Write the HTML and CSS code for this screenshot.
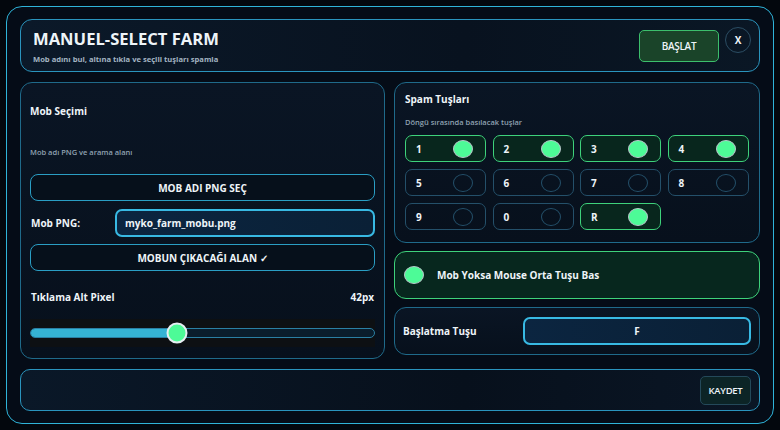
FILE: index.html
```html
<!DOCTYPE html>
<html lang="tr">
<head>
    <meta charset="UTF-8">
    <title>Manuel-Select Farm</title>
    <link rel="stylesheet" href="styles.css">
</head>
<body>
    <div class="frame">
        <header class="header">
            <div class="title-block">
                <h1 class="title">MANUEL-SELECT FARM</h1>
                <p class="subtitle">Mob adını bul, altına tıkla ve seçili tuşları spamla</p>
            </div>
            <button class="start-btn">BAŞLAT</button>
            <button class="close-btn">X</button>
        </header>

        <main class="main">
            <section class="card mob-card">
                <h2 class="card-title mob-title">Mob Seçimi</h2>
                <p class="card-desc mob-desc">Mob adı PNG ve arama alanı</p>
                <button class="wide-btn">MOB ADI PNG SEÇ</button>
                <div class="png-row">
                    <span class="field-label">Mob PNG:</span>
                    <div class="input-box left">myko_farm_mobu.png</div>
                </div>
                <button class="wide-btn">MOBUN ÇIKACAĞI ALAN ✓</button>
                <div class="pixel-row">
                    <span class="field-label">Tıklama Alt Pixel</span>
                    <span class="field-label">42px</span>
                </div>
                <div class="slider-band">
                    <div class="slider-track">
                        <div class="slider-fill" style="width: 42.5%"></div>
                        <div class="slider-thumb" style="left: 42.5%"></div>
                    </div>
                </div>
            </section>

            <div class="right-col">
                <section class="card spam-card">
                    <h2 class="card-title">Spam Tuşları</h2>
                    <p class="card-desc spam-desc">Döngü sırasında basılacak tuşlar</p>
                    <div class="key-grid">
                        <div class="key on"><span>1</span><i class="dot"></i></div>
                        <div class="key on"><span>2</span><i class="dot"></i></div>
                        <div class="key on"><span>3</span><i class="dot"></i></div>
                        <div class="key on"><span>4</span><i class="dot"></i></div>
                        <div class="key"><span>5</span><i class="dot"></i></div>
                        <div class="key"><span>6</span><i class="dot"></i></div>
                        <div class="key"><span>7</span><i class="dot"></i></div>
                        <div class="key"><span>8</span><i class="dot"></i></div>
                        <div class="key"><span>9</span><i class="dot"></i></div>
                        <div class="key"><span>0</span><i class="dot"></i></div>
                        <div class="key on"><span>R</span><i class="dot"></i></div>
                    </div>
                </section>

                <section class="card mouse-card">
                    <i class="dot on-dot"></i>
                    <span class="field-label">Mob Yoksa Mouse Orta Tuşu Bas</span>
                </section>

                <section class="card hotkey-card">
                    <span class="field-label">Başlatma Tuşu</span>
                    <div class="input-box center">F</div>
                </section>
            </div>
        </main>

        <footer class="footer">
            <button class="save-btn">KAYDET</button>
        </footer>
    </div>
</body>
</html>
```

FILE: styles.css
```css
* {
    margin: 0;
    padding: 0;
    box-sizing: border-box;
}

html, body {
    width: 100%;
    height: 100%;
    background: #03070d;
    overflow: hidden;
    font-family: "Open Sans", "Noto Sans", sans-serif;
    color: #eef4f8;
}

button {
    font-family: inherit;
    color: inherit;
    cursor: pointer;
}

.frame {
    margin: 6px;
    width: 768px;
    height: 418px;
    border: 1px solid #2fb3d8;
    border-radius: 16px;
    background: #050c17;
    padding: 12px 13px;
    display: flex;
    flex-direction: column;
}

.header {
    height: 53px;
    border: 1px solid #2a94bd;
    border-radius: 12px;
    background: linear-gradient(90deg, #0b1929, #08121f 60%, #0a1725);
    display: flex;
    align-items: center;
    padding: 0 8px 0 12px;
}

.title-block {
    flex: 1;
    padding-top: 1px;
}

.title {
    font-size: 16.6px;
    font-weight: 700;
    line-height: 20px;
}

.subtitle {
    font-size: 7.6px;
    font-weight: 700;
    color: #a3b4c2;
    margin-top: 5px;
}

.start-btn {
    width: 80px;
    height: 32px;
    border: 1px solid #3cbf6c;
    border-radius: 5px;
    background: #1a4429;
    font-size: 10px;
    font-weight: 600;
    letter-spacing: -0.3px;
    margin-right: 6px;
}

.close-btn {
    width: 26px;
    height: 26px;
    border: 1px solid #2b4d63;
    border-radius: 50%;
    background: transparent;
    font-size: 10px;
    font-weight: 700;
    margin-top: -12px;
}

.main {
    display: grid;
    grid-template-columns: 365px 366px;
    gap: 9px;
    margin-top: 10px;
    height: 277px;
}

.card {
    border: 1px solid #1f6a8a;
    border-radius: 12px;
    background: linear-gradient(180deg, #0a1524, #07101c);
}

.card-title {
    font-size: 10px;
    font-weight: 700;
}

.card-desc {
    font-size: 7.5px;
    font-weight: 600;
    color: #8fa1b1;
}

.mob-card {
    padding: 14px 9px 10px;
    display: flex;
    flex-direction: column;
}

.mob-title {
    margin-top: 7px;
}

.mob-desc {
    margin-top: 29px;
}

.wide-btn {
    height: 27px;
    border: 1px solid #2a9ec4;
    border-radius: 8px;
    background: #06101b;
    font-size: 10px;
    font-weight: 700;
    margin-top: 17px;
}

.png-row {
    display: flex;
    align-items: center;
    margin: 8px 0 7px;
}

.field-label {
    font-size: 10px;
    font-weight: 700;
}

.png-row .field-label {
    width: 85px;
    padding-left: 1px;
}

.input-box {
    flex: 1;
    height: 28px;
    border: 2px solid #38b9e3;
    border-radius: 7px;
    background: linear-gradient(90deg, #0b2540, #0a2036);
    font-size: 10px;
    font-weight: 700;
    display: flex;
    align-items: center;
}

.input-box.left {
    padding-left: 8px;
}

.input-box.center {
    justify-content: center;
}

.png-row + .wide-btn {
    margin-top: 0;
}

.pixel-row {
    display: flex;
    justify-content: space-between;
    margin-top: 19px;
    padding: 0 1px;
}

.slider-band {
    margin-top: 15px;
    height: 28px;
    background: #0d1013;
    display: flex;
    align-items: center;
}

.slider-track {
    position: relative;
    width: 100%;
    height: 10px;
    border: 1px solid #2a7fa3;
    border-radius: 5px;
    background: #0a1d2c;
}

.slider-fill {
    height: 100%;
    border-radius: 5px 0 0 5px;
    background: #35b3d4;
}

.slider-thumb {
    position: absolute;
    top: 50%;
    width: 21px;
    height: 21px;
    border: 2px solid #e6eef2;
    border-radius: 50%;
    background: #4dfb97;
    transform: translate(-50%, -50%);
}

.right-col {
    display: flex;
    flex-direction: column;
    gap: 8px;
}

.spam-card {
    height: 161px;
    padding: 9px 10px;
}

.spam-desc {
    margin-top: 11px;
}

.key-grid {
    display: grid;
    grid-template-columns: repeat(4, 81px);
    grid-auto-rows: 27px;
    column-gap: 6.5px;
    row-gap: 7px;
    margin-top: 8px;
}

.key {
    border: 1px solid #24506a;
    border-radius: 7px;
    display: flex;
    align-items: center;
    justify-content: space-between;
    padding: 0 12px 0 10px;
    font-size: 10px;
    font-weight: 700;
}

.dot {
    display: block;
    width: 20px;
    height: 18px;
    border: 1px solid #24506a;
    border-radius: 50%;
}

.key.on {
    border-color: #3ed27b;
    background: #08261d;
}

.key.on .dot, .on-dot {
    background: #4dfb97;
    border-color: #b8c4ca;
}

.mouse-card {
    height: 48px;
    border-color: #3ed27b;
    background: #07271e;
    display: flex;
    align-items: center;
    padding: 0 9px;
    gap: 13px;
}

.hotkey-card {
    height: 48px;
    display: flex;
    align-items: center;
    padding: 0 8px 0 8px;
}

.hotkey-card .field-label {
    width: 120px;
}

.footer {
    margin-top: 10px;
    height: 42px;
    border: 1px solid #2a94bd;
    border-radius: 10px;
    background: linear-gradient(90deg, #0a1828, #07101c 60%, #0a1625);
    display: flex;
    align-items: center;
    justify-content: flex-end;
    padding-right: 8px;
}

.save-btn {
    width: 51px;
    height: 29px;
    border: 1px solid #24495a;
    border-radius: 5px;
    background: #0c2426;
    font-size: 9.5px;
    font-weight: 600;
    letter-spacing: -0.3px;
}
```
